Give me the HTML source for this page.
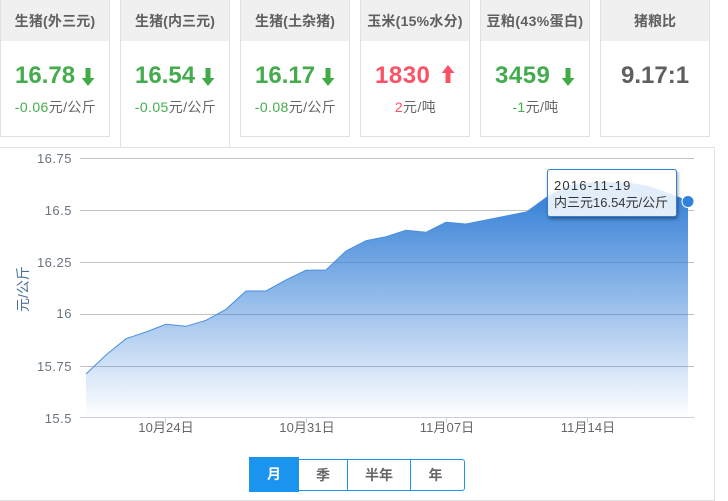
<!DOCTYPE html>
<html>
<head>
<meta charset="utf-8">
<style>
html,body{margin:0;padding:0;background:#fff}
body{width:728px;height:501px;position:relative;overflow:hidden;font-family:"Liberation Sans","Noto Sans CJK SC",sans-serif}
.card{position:absolute;top:-2px;width:108px;height:138px;border:1px solid #e1e1e1;border-width:0 1px 1px 1px;background:#fff;text-align:center}
.card .h{height:43px;background:#f0f0f0;color:#5f5f5f;font-size:14px;font-weight:bold;line-height:46px;white-space:nowrap;letter-spacing:.1px}
.num{position:absolute;left:0;right:0;top:63px;height:30px;font-size:24px;line-height:30px;font-weight:bold;white-space:nowrap}
.num span{position:absolute;top:0}
.sub{position:absolute;left:1px;right:0;top:99px;font-size:14px;line-height:20px;color:#666;white-space:nowrap;letter-spacing:.4px}
.g{color:#44ac4e}.r{color:#fb5268}
.ar{position:absolute}
.yl{position:absolute;right:656px;font-size:13px;line-height:16px;color:#6a7480;letter-spacing:.5px;white-space:nowrap}
.xl{position:absolute;top:420px;width:80px;text-align:center;font-size:13px;line-height:16px;color:#666;white-space:nowrap;letter-spacing:.1px}
.tip{position:absolute;left:547px;top:169px;width:128px;height:46px;border:1px solid #2f82d9;border-radius:3px;background:rgba(255,255,255,.85);box-shadow:1px 2px 3px rgba(0,0,0,.4);font-size:13px;line-height:17px;color:#333;white-space:nowrap}
.tip div{position:absolute;left:6px}
.btn{position:absolute;top:459px;height:30px;border:1px solid #1a94ee;border-width:1px 0;text-align:center;font-size:14px;font-weight:bold;line-height:30px;color:#666;box-sizing:content-box}
</style>
</head>
<body>

<div style="position:absolute;left:0;top:147px;width:714px;height:352px;border:solid #e1e1e1;border-width:1px 1px 1px 0;box-sizing:content-box"></div>

<div class="card" style="left:0;">
  <div class="h" style="letter-spacing:.2px">生猪(外三元)</div>
  <div class="num g"><span style="left:14px">16.78</span><svg class="ar" style="left:80px;top:6px" width="14" height="20" viewBox="0 0 14 20"><path d="M4.500 1h5v10h4L7 19 .8 11h3.700z" fill="#3faa46"/></svg></div>
  <div class="sub"><span class="g">-0.06</span>元/公斤</div>
</div>

<div class="card" style="left:120px;height:149px;border-bottom:0;background:#fff;z-index:2;">
  <div class="h">生猪(内三元)</div>
  <div class="num g"><span style="left:14px">16.54</span><svg class="ar" style="left:80px;top:6px" width="14" height="20" viewBox="0 0 14 20"><path d="M4.500 1h5v10h4L7 19 .8 11h3.700z" fill="#3faa46"/></svg></div>
  <div class="sub"><span class="g">-0.05</span>元/公斤</div>
</div>

<div class="card" style="left:240px;">
  <div class="h">生猪(土杂猪)</div>
  <div class="num g"><span style="left:14px">16.17</span><svg class="ar" style="left:80px;top:6px" width="14" height="20" viewBox="0 0 14 20"><path d="M4.500 1h5v10h4L7 19 .8 11h3.700z" fill="#3faa46"/></svg></div>
  <div class="sub"><span class="g">-0.08</span>元/公斤</div>
</div>

<div class="card" style="left:360px;">
  <div class="h" style="letter-spacing:.25px">玉米(15%水分)</div>
  <div class="num r"><span style="left:14px;letter-spacing:.5px">1830</span><svg class="ar" style="left:80px;top:3px" width="14" height="20" viewBox="0 0 14 20"><path d="M4.500 19h5V9h4L7 1 .8 9h3.700z" fill="#fb5268"/></svg></div>
  <div class="sub"><span class="r">2</span>元/吨</div>
</div>

<div class="card" style="left:480px;">
  <div class="h" style="letter-spacing:.4px">豆粕(43%蛋白)</div>
  <div class="num g"><span style="left:14px;letter-spacing:.5px">3459</span><svg class="ar" style="left:80px;top:6px" width="14" height="20" viewBox="0 0 14 20"><path d="M4.500 1h5v10h4L7 19 .8 11h3.700z" fill="#3faa46"/></svg></div>
  <div class="sub"><span class="g">-1</span>元/吨</div>
</div>

<div class="card" style="left:600px;">
  <div class="h">猪粮比</div>
  <div class="num" style="color:#5f5f5f"><span style="left:20px">9.17:1</span></div>
</div>

<svg style="position:absolute;left:0;top:0" width="728" height="501" viewBox="0 0 728 501">
  <defs>
    <linearGradient id="a" x1="0" y1="205" x2="0" y2="417" gradientUnits="userSpaceOnUse">
      <stop offset="0" stop-color="#3f86d9" stop-opacity="1"/>
      <stop offset="1" stop-color="#3f86d9" stop-opacity="0"/>
    </linearGradient>
  </defs>
  <g stroke="#c0c0c0" stroke-width="1" shape-rendering="crispEdges">
    <line x1="80" x2="694" y1="158.500" y2="158.500"/>
    <line x1="80" x2="694" y1="210.500" y2="210.500"/>
    <line x1="80" x2="694" y1="262.500" y2="262.500"/>
    <line x1="80" x2="694" y1="314.500" y2="314.500"/>
    <line x1="80" x2="694" y1="366.500" y2="366.500"/>
  </g>
  <line x1="80" x2="694" y1="417.500" y2="417.500" stroke="#c6ced9" shape-rendering="crispEdges"/>
  <g stroke="#c6ced9" shape-rendering="crispEdges">
    <line x1="165.500" x2="165.500" y1="418" y2="423"/>
    <line x1="306.500" x2="306.500" y1="418" y2="423"/>
    <line x1="446.500" x2="446.500" y1="418" y2="423"/>
    <line x1="587.500" x2="587.500" y1="418" y2="423"/>
  </g>
  <path fill="url(#a)" d="M86 374L106 355L126 338.700L146 332L166 324.300L186 326.300L206 320.300L226 309.300L246 291L266 291L286 280L306 270.300L326 270L346 251L366 240.700L386 236.700L406 230.300L426 232.300L446 222.300L466 224L486 220L506 216L527 211.700L547 197L567 186L587 183L607 182.500L627 183L647 186L667 193L688 201V417H86Z"/>
  <path fill="none" stroke="#4a8fdf" stroke-width="1" d="M86 374L106 355L126 338.700L146 332L166 324.300L186 326.300L206 320.300L226 309.300L246 291L266 291L286 280L306 270.300L326 270L346 251L366 240.700L386 236.700L406 230.300L426 232.300L446 222.300L466 224L486 220L506 216L527 211.700L547 197L567 186L587 183L607 182.500L627 183L647 186L667 193L688 201"/>
  <circle cx="688" cy="201.500" r="6" fill="#2f82d9" stroke="#fff" stroke-width="1"/>
</svg>

<div class="yl" style="top:151px">16.75</div>
<div class="yl" style="top:203px">16.5</div>
<div class="yl" style="top:255px">16.25</div>
<div class="yl" style="top:306px">16</div>
<div class="yl" style="top:359px">15.75</div>
<div class="yl" style="top:411px">15.5</div>

<div style="position:absolute;left:23px;top:289px;width:0;height:0"><div style="position:absolute;left:-30px;top:-9px;width:60px;text-align:center;font-size:14px;line-height:18px;color:#4d7199;transform:rotate(-90deg);white-space:nowrap">元/公斤</div></div>

<div class="xl" style="left:126px">10月24日</div>
<div class="xl" style="left:267px">10月31日</div>
<div class="xl" style="left:407px">11月07日</div>
<div class="xl" style="left:548px">11月14日</div>

<div class="tip">
  <div style="top:7px;letter-spacing:1.2px">2016-11-19</div>
  <div style="top:24px">内三元16.54元/公斤</div>
</div>

<div style="position:absolute;left:249px;top:457px;width:50px;height:35px;background:#1a94ee;color:#fff;text-align:center;font-size:14px;font-weight:bold;line-height:35px">月</div>
<div class="btn" style="left:299px;width:48px">季</div>
<div class="btn" style="left:347px;width:62px;border-left:1px solid #1a94ee;">半年</div>
<div class="btn" style="left:410px;width:49px;padding-right:4px;border-left:1px solid #1a94ee;border-right:1px solid #1a94ee;border-radius:0 3px 3px 0">年</div>

</body>
</html>
